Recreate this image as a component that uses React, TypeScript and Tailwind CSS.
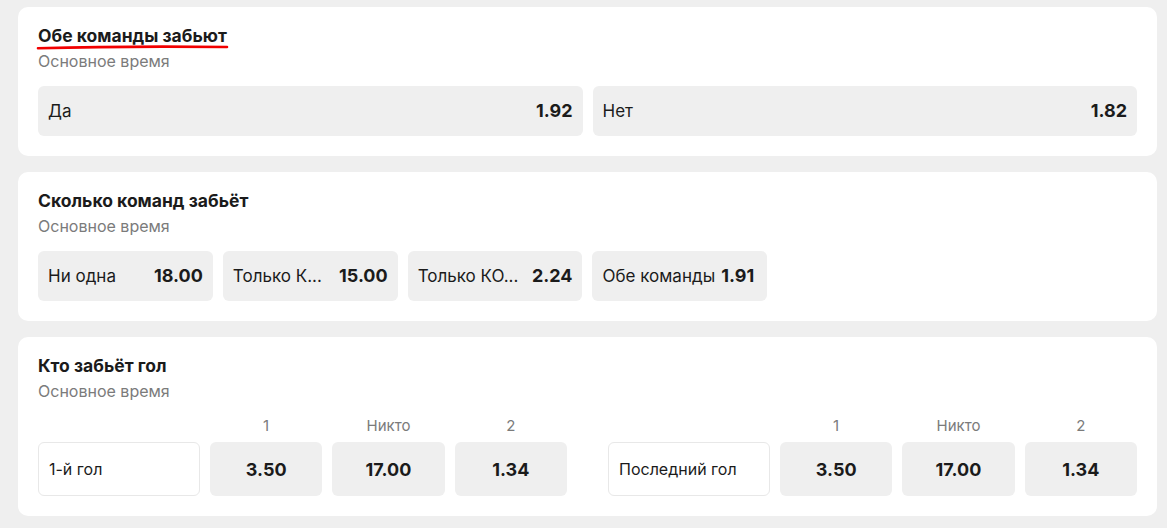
import React from "react";

const font = { fontFamily: "Inter, 'Noto Sans', sans-serif" };

function Header({ title, underline }: { title: string; underline?: boolean }) {
  return (
    <div className="relative">
      <div className="text-[17.5px] leading-[20px] font-bold text-[#1b1b1b]">{title}</div>
      {underline && (
        <svg className="absolute left-[-2px] top-[17px]" width="194" height="8" viewBox="0 0 194 8">
          <path d="M2 5.2 C 40 4.2, 120 3.2, 191 4" stroke="#f20000" strokeWidth="2.6" fill="none" strokeLinecap="round" />
        </svg>
      )}
      <div className="mt-[6px] text-[16px] leading-[18px] text-[#7b7b7b]">Основное время</div>
    </div>
  );
}

function Odd({ label, value, start }: { label: string; value: string; start?: boolean }) {
  return (
    <div className="h-[50px] rounded-[6px] bg-[#efefef] px-[10px] flex items-center">
      <div className={`w-full flex items-baseline gap-[6px] ${start ? "justify-start" : "justify-between"}`}>
        <span className="text-[17px] leading-[22px] text-[#1b1b1b] whitespace-nowrap">{label}</span>
        <span className="text-[18px] leading-[22px] font-bold text-[#1b1b1b]">{value}</span>
      </div>
    </div>
  );
}

function GoalBlock({ label }: { label: string }) {
  return (
    <div className="grid grid-cols-[162px_1fr_1fr_1fr] gap-x-[10px]">
      <div />
      <div className="text-center text-[15px] leading-[16px] text-[#7b7b7b]">1</div>
      <div className="text-center text-[15px] leading-[16px] text-[#7b7b7b]">Никто</div>
      <div className="text-center text-[15px] leading-[16px] text-[#7b7b7b]">2</div>
      <div className="mt-[8px] h-[54px] rounded-[6px] border border-[#e8e8e8] bg-white px-[10px] flex items-center text-[16px] text-[#1b1b1b]">
        {label}
      </div>
      {["3.50", "17.00", "1.34"].map((v) => (
        <div key={v} className="mt-[8px] h-[54px] rounded-[6px] bg-[#efefef] flex items-center justify-center text-[18px] font-bold text-[#1b1b1b]">
          {v}
        </div>
      ))}
    </div>
  );
}

export default function App() {
  return (
    <div className="min-h-[528px] bg-[#efefef] pt-[7px] pl-[18px] pr-[10px] flex flex-col gap-[16px]" style={font}>
      <div className="rounded-[10px] bg-white p-[20px] pt-[19px]">
        <Header title="Обе команды забьют" underline />
        <div className="mt-[16px] grid grid-cols-2 gap-[10px]">
          <Odd label="Да" value="1.92" />
          <Odd label="Нет" value="1.82" />
        </div>
      </div>
      <div className="rounded-[10px] bg-white p-[20px] pt-[19px]">
        <Header title="Сколько команд забьёт" />
        <div className="mt-[16px] grid grid-cols-6 gap-[10px]">
          <Odd label="Ни одна" value="18.00" />
          <Odd label="Только К..." value="15.00" />
          <Odd label="Только КО..." value="2.24" />
          <Odd label="Обе команды" value="1.91" start />
        </div>
      </div>
      <div className="rounded-[10px] bg-white p-[20px] pt-[19px]">
        <Header title="Кто забьёт гол" />
        <div className="mt-[18px] grid grid-cols-2 gap-[41px]">
          <GoalBlock label="1-й гол" />
          <GoalBlock label="Последний гол" />
        </div>
      </div>
    </div>
  );
}
